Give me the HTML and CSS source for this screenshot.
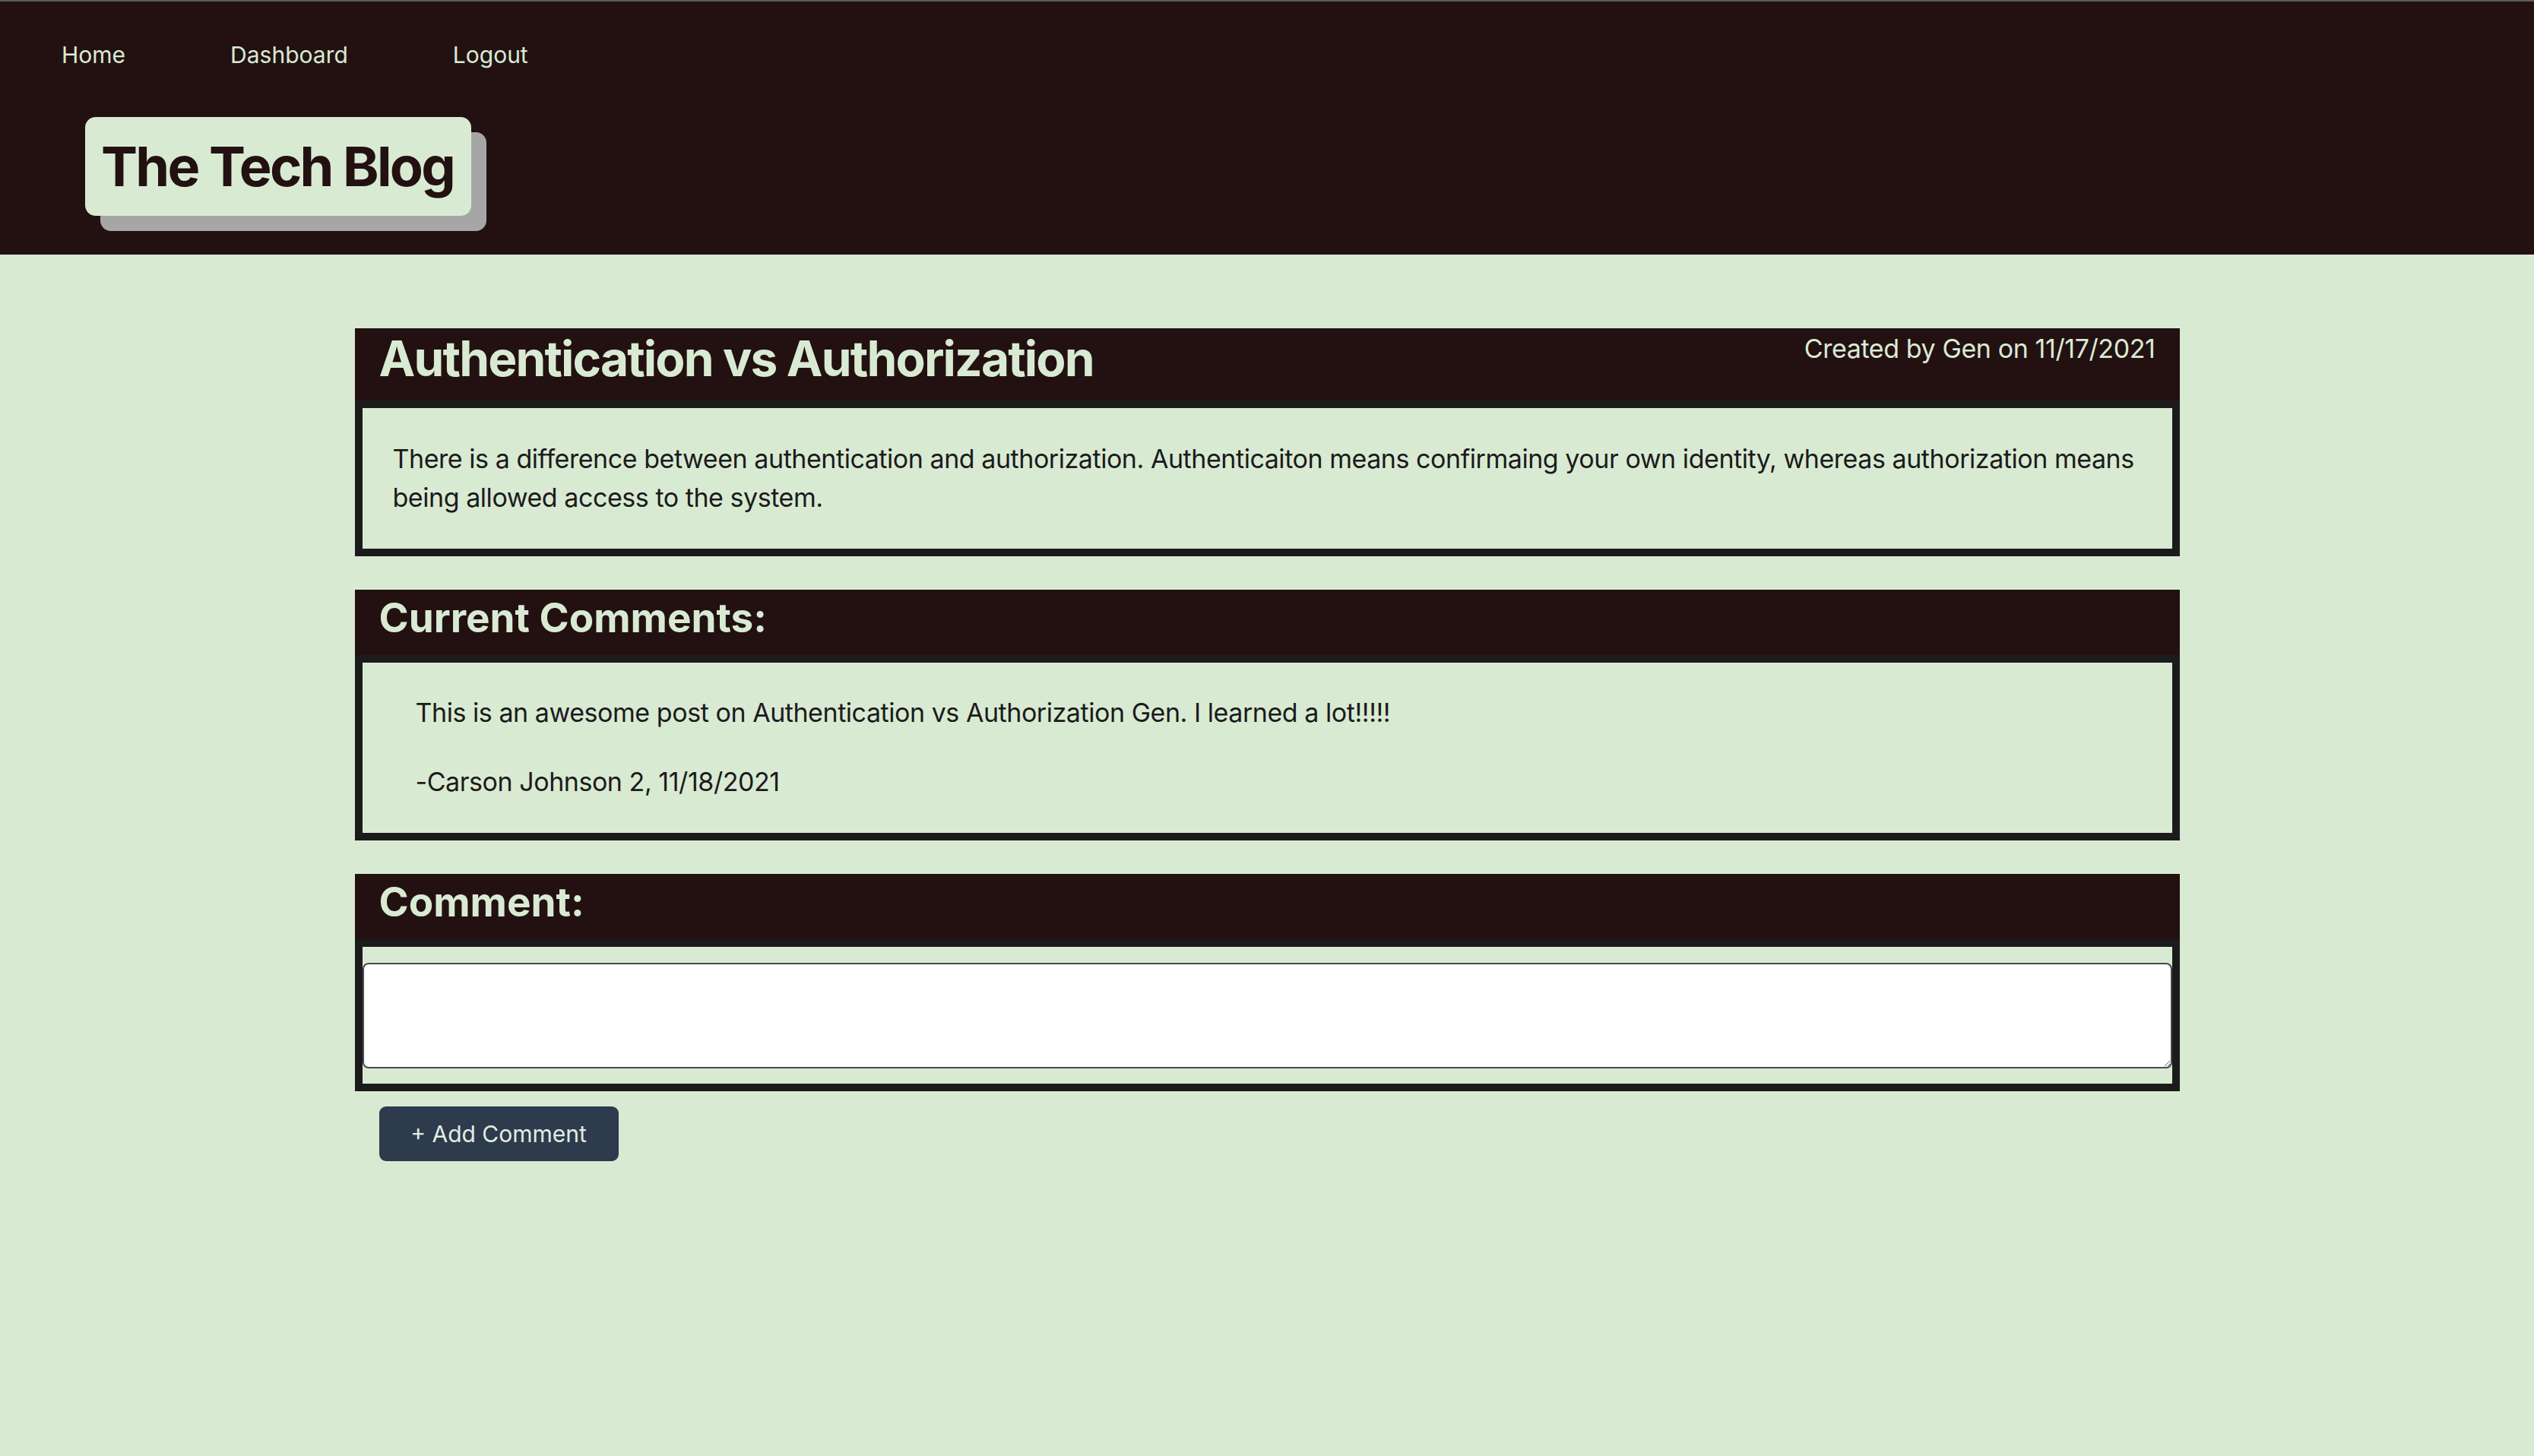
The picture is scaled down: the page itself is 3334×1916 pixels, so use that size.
FILE: index.html
```html
<!DOCTYPE html>
<html lang="en">
<head>
<meta charset="utf-8">
<title>The Tech Blog</title>
<link rel="stylesheet" href="styles.css">
</head>
<body>
<header class="site-header">
  <nav class="nav">
    <a class="nav-link" href="#">Home</a>
    <a class="nav-link" href="#">Dashboard</a>
    <a class="nav-link" href="#">Logout</a>
  </nav>
  <div class="logo-wrap">
    <h1 class="logo">The Tech Blog</h1>
  </div>
</header>
<main class="main">
  <section class="card">
    <div class="card-head card-head-post">
      <h2 class="post-title">Authentication vs Authorization</h2>
      <span class="post-meta">Created by Gen on 11/17/2021</span>
    </div>
    <div class="card-body post-body">
      <p class="text">There is a difference between authentication and authorization. Authenticaiton means confirmaing your own identity, whereas authorization means being allowed access to the system.</p>
    </div>
  </section>
  <section class="card">
    <div class="card-head card-head-small">
      <h2 class="section-title">Current Comments:</h2>
    </div>
    <div class="card-body comments-body">
      <div class="comment">
        <p class="text">This is an awesome post on Authentication vs Authorization Gen. I learned a lot!!!!!</p>
        <p class="text">-Carson Johnson 2, 11/18/2021</p>
      </div>
    </div>
  </section>
  <section class="card card-last">
    <div class="card-head card-head-small">
      <h2 class="section-title">Comment:</h2>
    </div>
    <div class="card-body form-body">
      <textarea class="comment-input"></textarea>
    </div>
  </section>
  <button class="btn" type="button">+ Add Comment</button>
</main>
</body>
</html>
```
FILE: styles.css
```css
* { box-sizing: border-box; }
html, body {
  margin: 0;
  padding: 0;
}
body {
  background: #d9ead3;
  font-family: Inter, "Noto Sans", "Liberation Sans", sans-serif;
  color: #1b1b1b;
  min-height: 1916px;
}
.site-header {
  background: #231112;
  border-top: 2px solid #5c5c5c;
  height: 335px;
}
.nav {
  display: flex;
  gap: 138px;
  padding: 0 0 0 81px;
  height: 145px;
  align-items: flex-start;
}
.nav-link {
  color: #d9ead3;
  text-decoration: none;
  font-size: 30px;
  line-height: 45px;
  margin-top: 48px;
}
.logo-wrap {
  display: flex;
  padding-left: 112px;
  margin-top: 7px;
}
.logo {
  margin: 0;
  background: #d9ead3;
  color: #231112;
  font-size: 72px;
  font-weight: 700;
  line-height: 130px;
  height: 130px;
  width: 508px;
  padding-left: 21px;
  letter-spacing: -2.7px;
  border-radius: 14px;
  box-shadow: 20px 20px 0 #a6a6a6;
  white-space: nowrap;
}
.main {
  width: 2401px;
  margin: 0 auto;
  padding-top: 97px;
  display: flex;
  flex-direction: column;
  align-items: stretch;
}
.card {
  margin-bottom: 44px;
}
.card-last {
  margin-bottom: 20px;
}
.card-head {
  background: #231112;
  color: #d9ead3;
  padding: 0 32px 15px 32px;
  display: flex;
  justify-content: space-between;
  align-items: flex-start;
}
.card-head-small {
  padding-top: 3px;
}
.post-title {
  margin: 0;
  font-size: 64px;
  line-height: 80px;
  font-weight: 700;
  letter-spacing: -1.85px;
}
.post-meta {
  font-size: 34px;
  line-height: 51px;
  margin-top: 1px;
  letter-spacing: -0.4px;
}
.section-title {
  margin: 0;
  font-size: 53px;
  line-height: 68px;
  font-weight: 700;
  letter-spacing: 0;
}
.card-body {
  border: 10px solid #1b1b1b;
  background: #d9ead3;
}
.text {
  margin: 0;
  font-size: 34px;
  line-height: 51px;
  color: #1b1b1b;
  letter-spacing: -0.45px;
}
.post-body {
  padding: 41px 30px 42px 40px;
}
.comments-body {
  padding: 40px 40px 42px 70px;
}
.comment {
  display: flex;
  flex-direction: column;
  gap: 40px;
}
.form-body {
  padding: 21px 0 20px 0;
  display: flex;
}
.comment-input {
  display: block;
  width: 100%;
  height: 139px;
  border: 2px solid #4a4a4a;
  border-radius: 8px;
  background: #ffffff;
  resize: vertical;
  font-family: inherit;
  font-size: 30px;
}
.btn {
  align-self: flex-start;
  margin-left: 32px;
  width: 315px;
  height: 72px;
  background: #2d3b4c;
  color: #e3ece2;
  border: none;
  border-radius: 9px;
  font-family: inherit;
  font-size: 30px;
  padding: 0;
}
```
